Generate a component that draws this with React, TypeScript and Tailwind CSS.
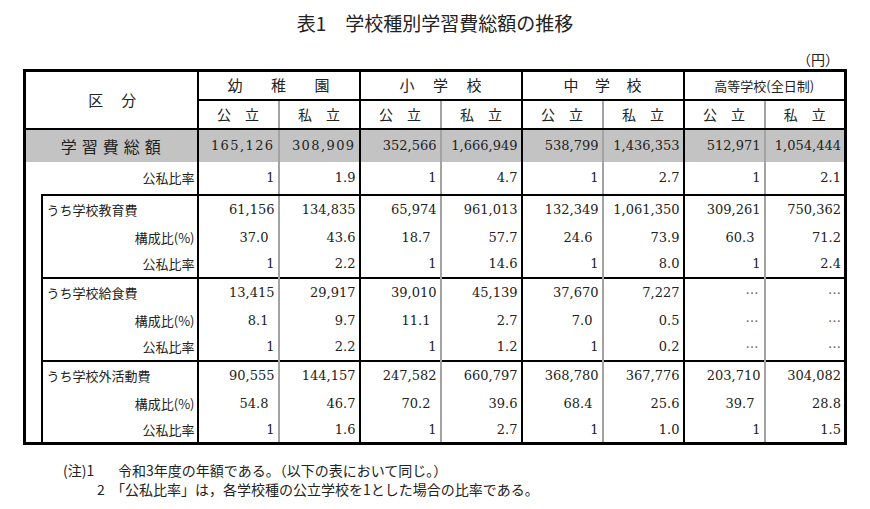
import * as React from "react";

const jp = "font-[family-name:Noto_Sans_CJK_JP,sans-serif]";
const num = "font-[family-name:DejaVu_Serif,Liberation_Serif,serif]";

const groups = [
  { name: ["幼", "稚", "園"], w: "w-[102px]" },
  { name: ["小", "学", "校"], w: "w-[82px]" },
  { name: ["中", "学", "校"], w: "w-[78px]" },
  { name: ["高等学校(全日制)"], w: "" },
];

const totals = ["165,126", "308,909", "352,566", "1,666,949", "538,799", "1,436,353", "512,971", "1,054,444"];
const totalRatio = ["1", "1.9", "1", "4.7", "1", "2.7", "1", "2.1"];

const blocks = [
  {
    label: "うち学校教育費",
    amount: ["61,156", "134,835", "65,974", "961,013", "132,349", "1,061,350", "309,261", "750,362"],
    share: ["37.0", "43.6", "18.7", "57.7", "24.6", "73.9", "60.3", "71.2"],
    ratio: ["1", "2.2", "1", "14.6", "1", "8.0", "1", "2.4"],
  },
  {
    label: "うち学校給食費",
    amount: ["13,415", "29,917", "39,010", "45,139", "37,670", "7,227", "…", "…"],
    share: ["8.1", "9.7", "11.1", "2.7", "7.0", "0.5", "…", "…"],
    ratio: ["1", "2.2", "1", "1.2", "1", "0.2", "…", "…"],
  },
  {
    label: "うち学校外活動費",
    amount: ["90,555", "144,157", "247,582", "660,797", "368,780", "367,776", "203,710", "304,082"],
    share: ["54.8", "46.7", "70.2", "39.6", "68.4", "25.6", "39.7", "28.8"],
    ratio: ["1", "1.6", "1", "2.7", "1", "1.0", "1", "1.5"],
  },
];

// 公立は灰色の線、私立は黒の線
const sideBorder = (i: number) =>
  i % 2 === 0 ? "border-r-2 border-r-[#a3a3a3]" : "border-r-2 border-r-black";

function Values({ values, top, shiftPublic }: { values: string[]; top?: boolean; shiftPublic?: boolean }) {
  return (
    <>
      {values.map((v, i) => {
        const pub = i % 2 === 0;
        const dots = v === "…";
        let pad = "pr-[3px]";
        if (dots) pad = pub ? "pr-[5px]" : "pr-[3px]";
        else if (shiftPublic && pub) pad = "pr-[9px]";
        return (
          <td
            key={i}
            className={`${sideBorder(i)} ${top ? "border-t-2 border-t-black" : ""} ${pad} text-right ${dots ? `${jp} text-[#666]` : ""}`}
          >
            {v}
          </td>
        );
      })}
    </>
  );
}

export default function App() {
  return (
    <div className="w-[870px] h-[509px] bg-white text-[#222] overflow-hidden">
      <h1 className={`${jp} pt-[9px] text-center text-[19px] leading-[28px] font-normal`}>
        表1<span className="inline-block w-[19px]" />学校種別学習費総額の推移
      </h1>
      <div className={`${jp} h-[32px] pr-[31px] pt-[13px] text-right text-[14px] leading-[18px]`}>（円）</div>

      <table className={`${num} ml-[23px] w-[823px] table-fixed border-[3px] border-black text-[13px]`}>
        <colgroup>
          <col className="w-[17px]" />
          <col className="w-[156px]" />
          {totals.map((_, i) => (
            <col key={i} className="w-[81px]" />
          ))}
        </colgroup>
        <thead>
          <tr className="h-[29px]">
            <th colSpan={2} rowSpan={2} className={`${jp} border-r-2 border-b-2 border-black text-[15px] font-normal`}>
              <div className="flex justify-center gap-[18px] pl-[2px]">
                <span>区</span>
                <span>分</span>
              </div>
            </th>
            {groups.map((g, i) => (
              <th key={i} colSpan={2} className={`${jp} border-r-2 border-b-2 border-black font-normal ${g.name.length > 1 ? "text-[15px]" : "text-[13px]"}`}>
                <div className={`mx-auto flex ${g.w} ${g.name.length > 1 ? "justify-between" : "justify-center"}`}>
                  {g.name.map((c, j) => (
                    <span key={j}>{c}</span>
                  ))}
                </div>
              </th>
            ))}
          </tr>
          <tr className="h-[29px]">
            {totals.map((_, i) => (
              <th key={i} className={`${jp} ${sideBorder(i)} border-b-2 border-b-black text-[14px] font-normal`}>
                {i % 2 === 0 ? "公　立" : "私　立"}
              </th>
            ))}
          </tr>
        </thead>
        <tbody>
          <tr className="h-[33px] bg-[#c3c3c3]">
            <th colSpan={2} className={`${jp} border-r-2 border-r-black text-[16px] font-normal tracking-[5px] pl-[4px]`}>
              学習費総額
            </th>
            {totals.map((v, i) => (
              <td key={i} className={`${sideBorder(i)} pr-[3px] text-right ${i < 2 ? "tracking-[1.4px]" : ""}`}>
                {v}
              </td>
            ))}
          </tr>
          <tr className="h-[33px]">
            <td colSpan={2} className={`${jp} border-r-2 border-r-black pr-[2px] text-right`}>
              公私比率
            </td>
            {totalRatio.map((v, i) => (
              <td key={i} className={`${sideBorder(i)} border-b-2 border-b-black pr-[3px] text-right`}>
                {v}
              </td>
            ))}
          </tr>
          {blocks.map((b, bi) => (
            <React.Fragment key={bi}>
              <tr className="h-[30px]">
                {bi === 0 && <td rowSpan={9} className="border-r-2 border-r-black" />}
                <td className={`${jp} border-t-2 border-t-black border-r-2 border-r-black pl-[4px] text-left`}>{b.label}</td>
                <Values values={b.amount} top />
              </tr>
              <tr className="h-[27px]">
                <td className={`${jp} border-r-2 border-r-black pr-[2px] text-right`}>構成比(%)</td>
                <Values values={b.share} shiftPublic />
              </tr>
              <tr className="h-[26px]">
                <td className={`${jp} border-r-2 border-r-black pr-[2px] text-right`}>公私比率</td>
                <Values values={b.ratio} />
              </tr>
            </React.Fragment>
          ))}
        </tbody>
      </table>

      <div className={`${jp} mt-[16px] text-[14px] leading-[19px]`}>
        <div className="flex">
          <span className="ml-[63px] w-[55px]">(注)1</span>
          <span>令和3年度の年額である。（以下の表において同じ。）</span>
        </div>
        <div className="flex">
          <span className="ml-[97px] w-[14px]">2</span>
          <span>「公私比率」は，各学校種の公立学校を1とした場合の比率である。</span>
        </div>
      </div>
    </div>
  );
}
